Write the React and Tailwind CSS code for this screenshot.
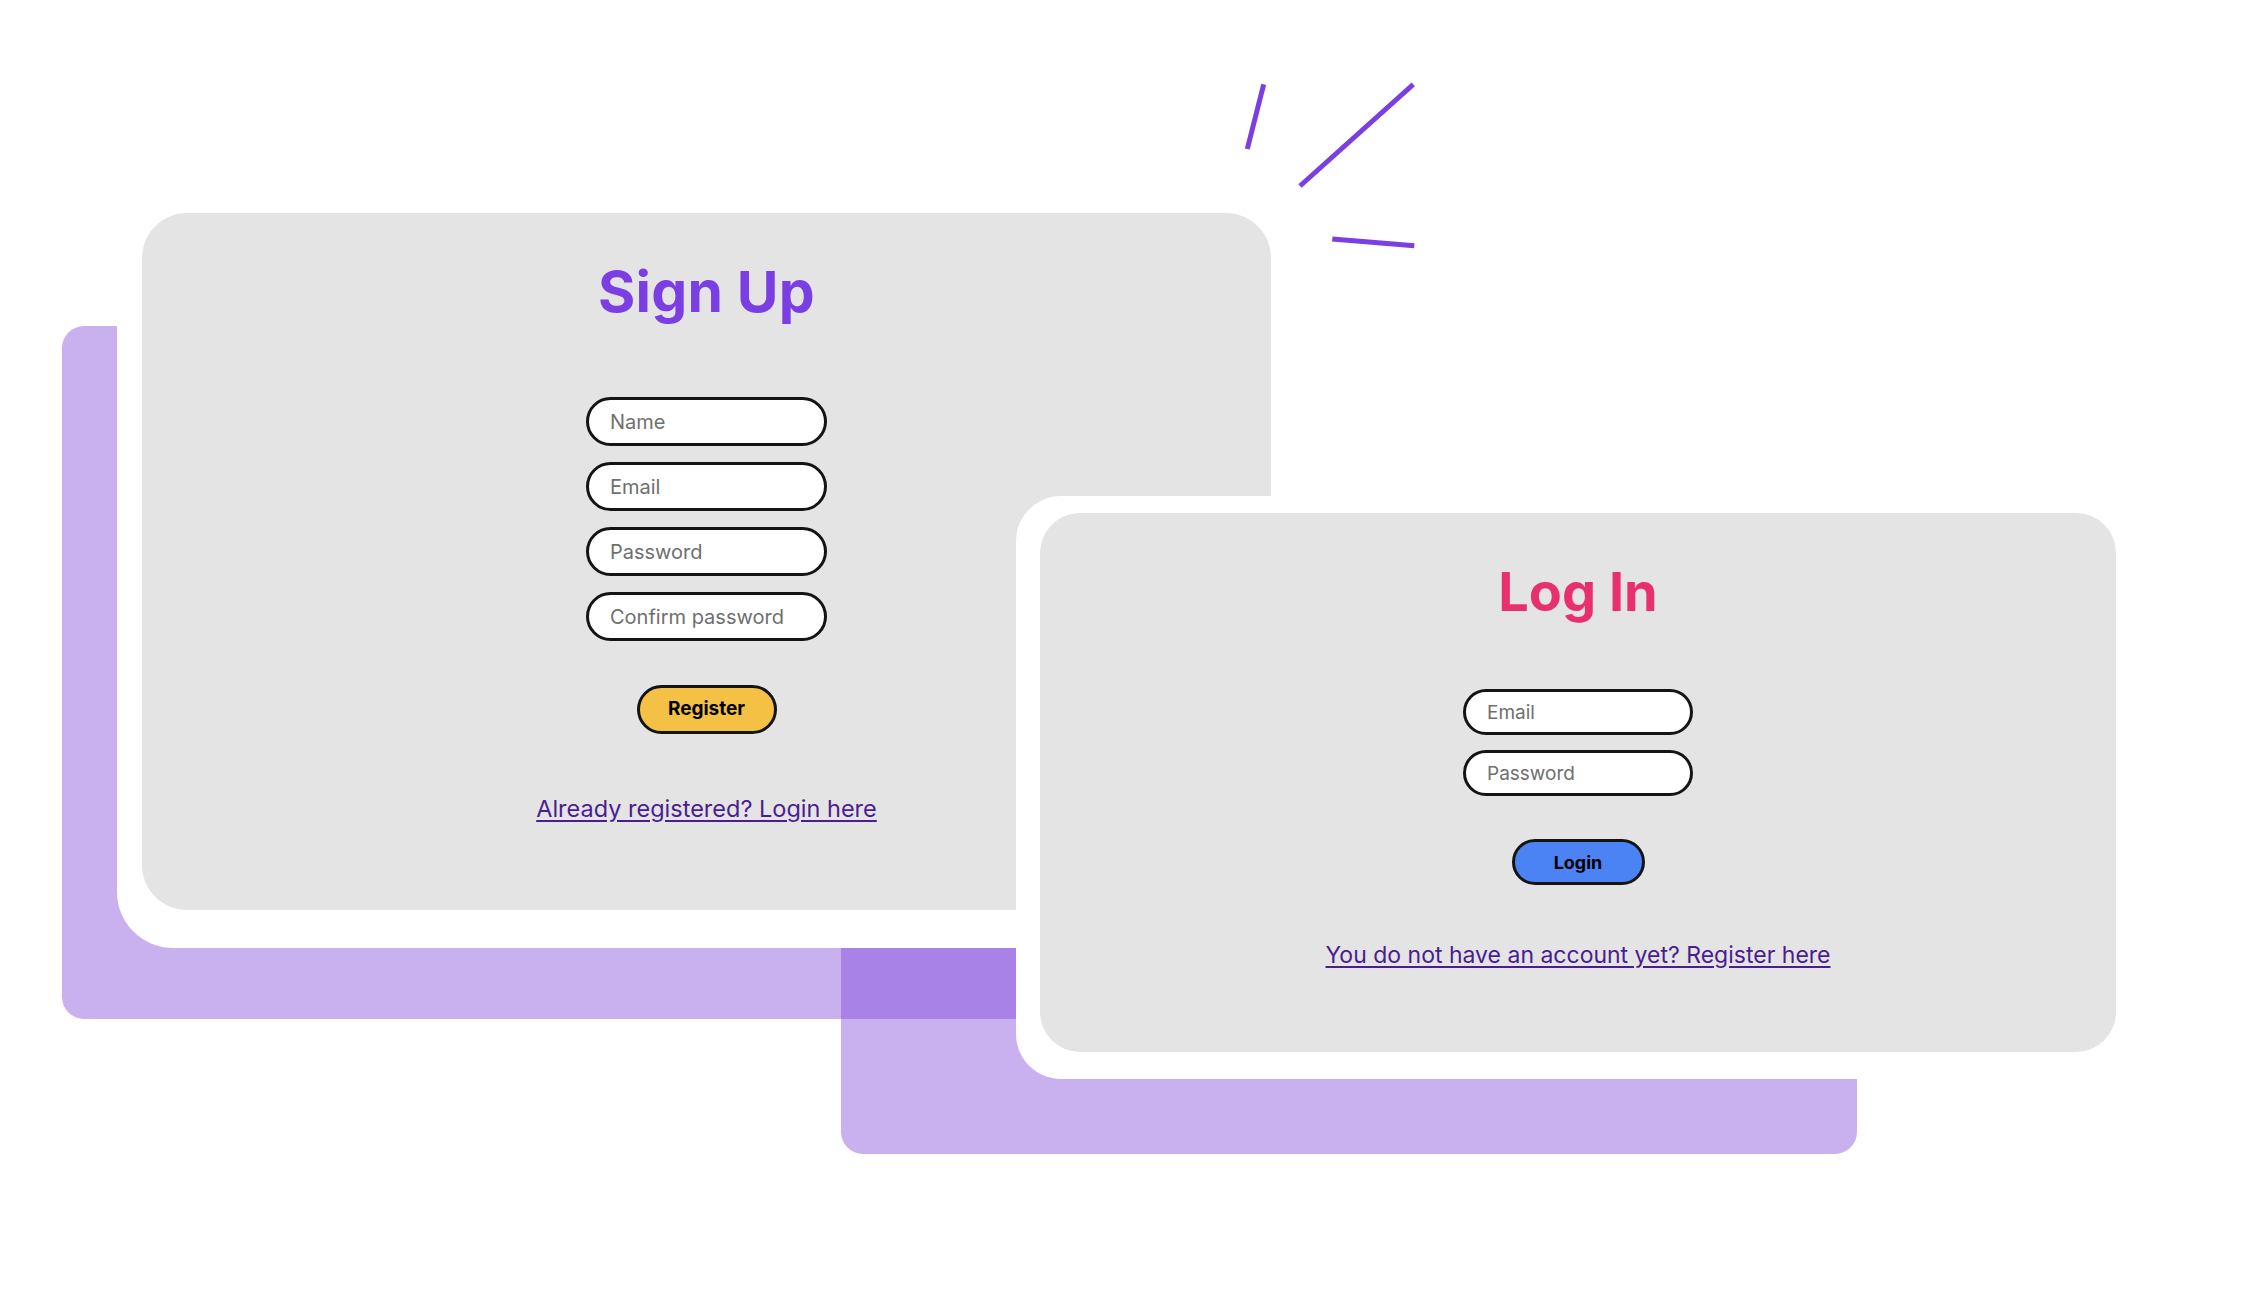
import React from "react";

const font = { fontFamily: '"Inter", "Noto Sans", sans-serif' };

function Field({ placeholder, h, w, size }) {
  return (
    <input
      type="text"
      placeholder={placeholder}
      className={`${w} ${h} ${size} rounded-full border-[3px] border-[#141414] bg-white pl-[21px] text-[#333] placeholder:text-[#6f6f6f] outline-none`}
    />
  );
}

export default function App() {
  return (
    <div className="relative w-[2250px] h-[1294px] overflow-hidden bg-white" style={font}>
      {/* decorative sparkle lines */}
      <svg
        className="absolute left-[1230px] top-[60px]"
        width="200"
        height="200"
        viewBox="0 0 200 200"
        fill="none"
      >
        <line x1="33.7" y1="24.3" x2="17.3" y2="89" stroke="#7a3ee3" strokeWidth="5" />
        <line x1="183.3" y1="24.3" x2="70" y2="126" stroke="#7a3ee3" strokeWidth="5" />
        <line x1="102.3" y1="179" x2="184.3" y2="185.7" stroke="#7a3ee3" strokeWidth="5" />
      </svg>

      {/* purple back plates */}
      <div className="absolute left-[62px] top-[326px] w-[1100px] h-[693px] rounded-[22px] bg-[#783cda]/40" />
      <div className="absolute left-[841px] top-[700px] w-[1016px] h-[454px] rounded-[22px] bg-[#783cda]/40" />

      {/* Sign up white frame */}
      <div className="absolute left-[117px] top-[190px] w-[1180px] h-[758px] rounded-[56px] bg-white" />
      {/* Sign up card */}
      <div className="absolute left-[142px] top-[213px] w-[1129px] h-[697px] rounded-[45px] bg-[#e4e4e4] flex flex-col items-center pt-[51px]">
        <h1 className="text-[57px] leading-[56px] font-bold text-[#7a3ee3] tracking-[0.2px]">Sign Up</h1>
        <div className="mt-[77px] flex flex-col gap-[16px]">
          <Field placeholder="Name" w="w-[241px]" h="h-[49px]" size="text-[20px]" />
          <Field placeholder="Email" w="w-[241px]" h="h-[49px]" size="text-[20px]" />
          <Field placeholder="Password" w="w-[241px]" h="h-[49px]" size="text-[20px]" />
          <Field placeholder="Confirm password" w="w-[241px]" h="h-[49px]" size="text-[20px]" />
        </div>
        <button className="mt-[44px] w-[140px] h-[49px] rounded-full border-[3px] border-[#141414] bg-[#f5c144] text-[19px] font-bold text-black">
          Register
        </button>
        <a href="#" className="mt-[63px] text-[23.5px] leading-[23px] text-[#4a1d91] underline underline-offset-[3px]">
          Already registered? Login here
        </a>
      </div>

      {/* Log in white frame */}
      <div className="absolute left-[1016px] top-[496px] w-[1124px] h-[583px] rounded-[45px] bg-white" />
      {/* Log in card */}
      <div className="absolute left-[1040px] top-[513px] w-[1076px] h-[539px] rounded-[40px] bg-[#e4e4e4] flex flex-col items-center pt-[52px]">
        <h1 className="text-[54px] leading-[54px] font-bold text-[#e9306f]">Log In</h1>
        <div className="mt-[70px] flex flex-col gap-[15px]">
          <Field placeholder="Email" w="w-[230px]" h="h-[46px]" size="text-[19px]" />
          <Field placeholder="Password" w="w-[230px]" h="h-[46px]" size="text-[19px]" />
        </div>
        <button className="mt-[43px] w-[133px] h-[46px] rounded-full border-[3px] border-[#141414] bg-[#4b82f4] text-[18px] font-bold text-black">
          Login
        </button>
        <a href="#" className="mt-[59px] text-[23px] leading-[22px] text-[#4a1d91] underline underline-offset-[3px]">
          You do not have an account yet? Register here
        </a>
      </div>
    </div>
  );
}
